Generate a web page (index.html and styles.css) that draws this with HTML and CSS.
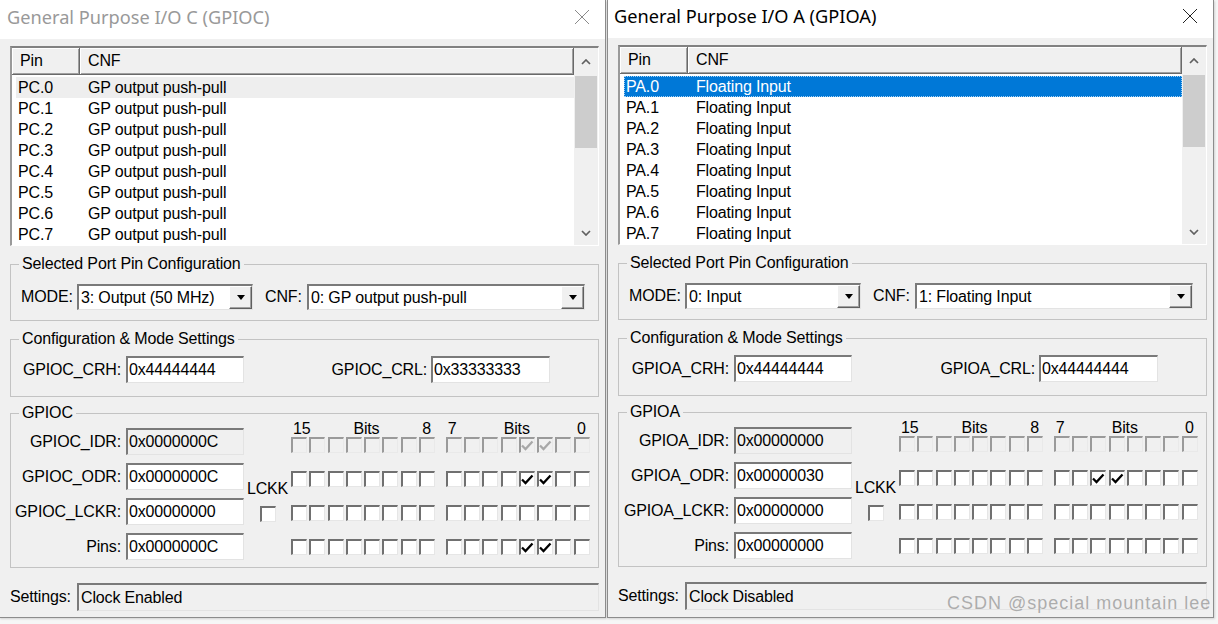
FILE: index.html
```html
<!DOCTYPE html>
<html>
<head>
<meta charset="utf-8">
<title>GPIO</title>
<link rel="stylesheet" href="styles.css">
</head>
<body>
<div class="desk">

<section class="win inactive">
  <header class="titlebar">
    <span class="title">General Purpose I/O C (GPIOC)</span>
    <svg class="close" viewBox="0 0 16 16"><path d="M1 1L15 15M15 1L1 15"/></svg>
  </header>
  <div class="body">
    <div class="listbox">
      <div class="lb-main">
        <div class="lb-head"><span class="hc pin">Pin</span><span class="hc cnf">CNF</span></div>
        <div class="lb-rows">
          <div class="row selg"><span class="c1">PC.0</span><span>GP output push-pull</span></div>
          <div class="row"><span class="c1">PC.1</span><span>GP output push-pull</span></div>
          <div class="row"><span class="c1">PC.2</span><span>GP output push-pull</span></div>
          <div class="row"><span class="c1">PC.3</span><span>GP output push-pull</span></div>
          <div class="row"><span class="c1">PC.4</span><span>GP output push-pull</span></div>
          <div class="row"><span class="c1">PC.5</span><span>GP output push-pull</span></div>
          <div class="row"><span class="c1">PC.6</span><span>GP output push-pull</span></div>
          <div class="row"><span class="c1">PC.7</span><span>GP output push-pull</span></div>
        </div>
      </div>
      <div class="vscroll">
        <span class="sbtn up"><svg viewBox="0 0 10 6"><path d="M1 5L5 1L9 5"/></svg></span>
        <span class="thumb"></span>
        <span class="sbtn down"><svg viewBox="0 0 10 6"><path d="M1 1L5 5L9 1"/></svg></span>
      </div>
    </div>

    <fieldset class="grp">
      <legend>Selected Port Pin Configuration</legend>
      <div class="g-sel">
        <span class="lbl-mode">MODE:</span>
        <div class="combo c-mode"><span class="val">3: Output (50 MHz)</span><span class="drop"></span></div>
        <span class="lbl-cnf">CNF:</span>
        <div class="combo c-cnf"><span class="val">0: GP output push-pull</span><span class="drop"></span></div>
      </div>
    </fieldset>

    <fieldset class="grp">
      <legend>Configuration &amp; Mode Settings</legend>
      <div class="g-cfg">
        <span class="rl">GPIOC_CRH:</span><span class="tb">0x44444444</span>
        <span class="rl rl2">GPIOC_CRL:</span><span class="tb tb2">0x33333333</span>
      </div>
    </fieldset>

    <fieldset class="grp">
      <legend>GPIOC</legend>
      <div class="port">
        <div class="regs">
          <div class="reg"><span class="rl">GPIOC_IDR:</span><span class="tb ro">0x0000000C</span></div>
          <div class="reg"><span class="rl">GPIOC_ODR:</span><span class="tb">0x0000000C</span></div>
          <div class="reg"><span class="rl">GPIOC_LCKR:</span><span class="tb">0x00000000</span></div>
          <div class="reg"><span class="rl">Pins:</span><span class="tb">0x0000000C</span></div>
        </div>
        <div class="lckk"><span>LCKK</span><i class="cb"></i></div>
        <div class="bits">
          <div class="bhead">
            <div class="bh"><span>15</span><span>Bits</span><span>8</span></div>
            <div class="bh"><span>7</span><span>Bits</span><span>0</span></div>
          </div>
          <div class="brow dis">
            <div class="bg"><i class="cb"></i><i class="cb"></i><i class="cb"></i><i class="cb"></i><i class="cb"></i><i class="cb"></i><i class="cb"></i><i class="cb"></i></div>
            <div class="bg"><i class="cb"></i><i class="cb"></i><i class="cb"></i><i class="cb"></i><i class="cb"><svg viewBox="0 0 13 13"><path d="M1 6.5L4.5 10L11.5 2.5"/></svg></i><i class="cb"><svg viewBox="0 0 13 13"><path d="M1 6.5L4.5 10L11.5 2.5"/></svg></i><i class="cb"></i><i class="cb"></i></div>
          </div>
          <div class="brow">
            <div class="bg"><i class="cb"></i><i class="cb"></i><i class="cb"></i><i class="cb"></i><i class="cb"></i><i class="cb"></i><i class="cb"></i><i class="cb"></i></div>
            <div class="bg"><i class="cb"></i><i class="cb"></i><i class="cb"></i><i class="cb"></i><i class="cb"><svg viewBox="0 0 13 13"><path d="M1 6.5L4.5 10L11.5 2.5"/></svg></i><i class="cb"><svg viewBox="0 0 13 13"><path d="M1 6.5L4.5 10L11.5 2.5"/></svg></i><i class="cb"></i><i class="cb"></i></div>
          </div>
          <div class="brow">
            <div class="bg"><i class="cb"></i><i class="cb"></i><i class="cb"></i><i class="cb"></i><i class="cb"></i><i class="cb"></i><i class="cb"></i><i class="cb"></i></div>
            <div class="bg"><i class="cb"></i><i class="cb"></i><i class="cb"></i><i class="cb"></i><i class="cb"></i><i class="cb"></i><i class="cb"></i><i class="cb"></i></div>
          </div>
          <div class="brow">
            <div class="bg"><i class="cb"></i><i class="cb"></i><i class="cb"></i><i class="cb"></i><i class="cb"></i><i class="cb"></i><i class="cb"></i><i class="cb"></i></div>
            <div class="bg"><i class="cb"></i><i class="cb"></i><i class="cb"></i><i class="cb"></i><i class="cb"><svg viewBox="0 0 13 13"><path d="M1 6.5L4.5 10L11.5 2.5"/></svg></i><i class="cb"><svg viewBox="0 0 13 13"><path d="M1 6.5L4.5 10L11.5 2.5"/></svg></i><i class="cb"></i><i class="cb"></i></div>
          </div>
        </div>
      </div>
    </fieldset>

    <div class="setrow"><span class="sl">Settings:</span><span class="tb ro wide">Clock Enabled</span></div>
  </div>
</section>

<section class="win active">
  <header class="titlebar">
    <span class="title">General Purpose I/O A (GPIOA)</span>
    <svg class="close" viewBox="0 0 16 16"><path d="M1 1L15 15M15 1L1 15"/></svg>
  </header>
  <div class="body">
    <div class="listbox">
      <div class="lb-main">
        <div class="lb-head"><span class="hc pin">Pin</span><span class="hc cnf">CNF</span></div>
        <div class="lb-rows">
          <div class="row sel"><span class="c1">PA.0</span><span>Floating Input</span></div>
          <div class="row"><span class="c1">PA.1</span><span>Floating Input</span></div>
          <div class="row"><span class="c1">PA.2</span><span>Floating Input</span></div>
          <div class="row"><span class="c1">PA.3</span><span>Floating Input</span></div>
          <div class="row"><span class="c1">PA.4</span><span>Floating Input</span></div>
          <div class="row"><span class="c1">PA.5</span><span>Floating Input</span></div>
          <div class="row"><span class="c1">PA.6</span><span>Floating Input</span></div>
          <div class="row"><span class="c1">PA.7</span><span>Floating Input</span></div>
        </div>
      </div>
      <div class="vscroll">
        <span class="sbtn up"><svg viewBox="0 0 10 6"><path d="M1 5L5 1L9 5"/></svg></span>
        <span class="thumb"></span>
        <span class="sbtn down"><svg viewBox="0 0 10 6"><path d="M1 1L5 5L9 1"/></svg></span>
      </div>
    </div>

    <fieldset class="grp">
      <legend>Selected Port Pin Configuration</legend>
      <div class="g-sel">
        <span class="lbl-mode">MODE:</span>
        <div class="combo c-mode"><span class="val">0: Input</span><span class="drop"></span></div>
        <span class="lbl-cnf">CNF:</span>
        <div class="combo c-cnf"><span class="val">1: Floating Input</span><span class="drop"></span></div>
      </div>
    </fieldset>

    <fieldset class="grp">
      <legend>Configuration &amp; Mode Settings</legend>
      <div class="g-cfg">
        <span class="rl">GPIOA_CRH:</span><span class="tb">0x44444444</span>
        <span class="rl rl2">GPIOA_CRL:</span><span class="tb tb2">0x44444444</span>
      </div>
    </fieldset>

    <fieldset class="grp">
      <legend>GPIOA</legend>
      <div class="port">
        <div class="regs">
          <div class="reg"><span class="rl">GPIOA_IDR:</span><span class="tb ro">0x00000000</span></div>
          <div class="reg"><span class="rl">GPIOA_ODR:</span><span class="tb">0x00000030</span></div>
          <div class="reg"><span class="rl">GPIOA_LCKR:</span><span class="tb">0x00000000</span></div>
          <div class="reg"><span class="rl">Pins:</span><span class="tb">0x00000000</span></div>
        </div>
        <div class="lckk"><span>LCKK</span><i class="cb"></i></div>
        <div class="bits">
          <div class="bhead">
            <div class="bh"><span>15</span><span>Bits</span><span>8</span></div>
            <div class="bh"><span>7</span><span>Bits</span><span>0</span></div>
          </div>
          <div class="brow dis">
            <div class="bg"><i class="cb"></i><i class="cb"></i><i class="cb"></i><i class="cb"></i><i class="cb"></i><i class="cb"></i><i class="cb"></i><i class="cb"></i></div>
            <div class="bg"><i class="cb"></i><i class="cb"></i><i class="cb"></i><i class="cb"></i><i class="cb"></i><i class="cb"></i><i class="cb"></i><i class="cb"></i></div>
          </div>
          <div class="brow">
            <div class="bg"><i class="cb"></i><i class="cb"></i><i class="cb"></i><i class="cb"></i><i class="cb"></i><i class="cb"></i><i class="cb"></i><i class="cb"></i></div>
            <div class="bg"><i class="cb"></i><i class="cb"></i><i class="cb"><svg viewBox="0 0 13 13"><path d="M1 6.5L4.5 10L11.5 2.5"/></svg></i><i class="cb"><svg viewBox="0 0 13 13"><path d="M1 6.5L4.5 10L11.5 2.5"/></svg></i><i class="cb"></i><i class="cb"></i><i class="cb"></i><i class="cb"></i></div>
          </div>
          <div class="brow">
            <div class="bg"><i class="cb"></i><i class="cb"></i><i class="cb"></i><i class="cb"></i><i class="cb"></i><i class="cb"></i><i class="cb"></i><i class="cb"></i></div>
            <div class="bg"><i class="cb"></i><i class="cb"></i><i class="cb"></i><i class="cb"></i><i class="cb"></i><i class="cb"></i><i class="cb"></i><i class="cb"></i></div>
          </div>
          <div class="brow">
            <div class="bg"><i class="cb"></i><i class="cb"></i><i class="cb"></i><i class="cb"></i><i class="cb"></i><i class="cb"></i><i class="cb"></i><i class="cb"></i></div>
            <div class="bg"><i class="cb"></i><i class="cb"></i><i class="cb"></i><i class="cb"></i><i class="cb"></i><i class="cb"></i><i class="cb"></i><i class="cb"></i></div>
          </div>
        </div>
      </div>
    </fieldset>

    <div class="setrow"><span class="sl">Settings:</span><span class="tb ro wide">Clock Disabled</span></div>
  </div>
</section>

<div class="watermark">CSDN @special mountain lee</div>
</div>
</body>
</html>
```

FILE: styles.css
```css
* { box-sizing: border-box; }
html, body { margin: 0; padding: 0; }
body {
  width: 1218px;
  height: 624px;
  overflow: hidden;
  background: #f6f6f6;
  font-family: "Liberation Sans", Arial, sans-serif;
  font-size: 16px;
  letter-spacing: -0.15px;
  color: #000;
}
.desk {
  position: relative;
  display: flex;
  align-items: flex-start;
  gap: 1px;
  margin-left: -1px;
  height: 624px;
}
.win {
  width: 607px;
  height: 618px;
  flex: none;
  display: flex;
  flex-direction: column;
  background: #f0f0f0;
  border: 1px solid #8c8c8c;
  border-top: 0;
  box-shadow: 1px 1px 2px rgba(0,0,0,0.15);
}
.titlebar {
  height: 39px;
  flex: none;
  background: #fff;
  display: flex;
  align-items: center;
  justify-content: space-between;
  padding: 0 15px 6px 7px;
}
.active .titlebar { height: 38px; padding-left: 6px; }
.title {
  font-family: "Noto Sans", "Open Sans", sans-serif;
  font-size: 18.2px;
  letter-spacing: 0;
  color: #000;
}
.inactive .title { color: #999; }
.close { width: 16px; height: 16px; fill: none; stroke: #222; stroke-width: 1; }
.inactive .close { stroke: #8a8a8a; }

.body {
  flex: 1;
  display: flex;
  flex-direction: column;
  padding: 7px 6px 6px 10px;
}

/* list view */
.listbox {
  height: 200px;
  flex: none;
  display: flex;
  background: #fff;
  border-style: solid;
  border-width: 2px 1px 1px 2px;
  border-color: #828282 #fff #fff #9a9a9a;
}
.lb-main { flex: 1; min-width: 0; display: flex; flex-direction: column; }
.lb-head { height: 27px; flex: none; display: flex; }
.hc {
  background: #f0f0f0;
  border-right: 1px solid #696969;
  border-bottom: 1px solid #696969;
  box-shadow: inset 1px 1px #fff, inset -1px -1px #a0a0a0;
  line-height: 26px;
  padding-left: 8px;
}
.hc.pin { width: 68px; }
.hc.cnf { flex: 1; }
.lb-rows { padding-top: 2px; }
.row {
  display: flex;
  height: 21px;
  line-height: 21px;
  margin-left: 4px;
  padding-left: 2px;
  white-space: nowrap;
}
.row .c1 { width: 70px; }
.row.selg { background: #eeeeee; }
.row.sel { background: #0078d7; color: #fff; outline: 1px dotted #9fd0f5; outline-offset: -1px; }

.vscroll {
  width: 24px;
  flex: none;
  background: #f0f0f0;
  display: flex;
  flex-direction: column;
  align-items: center;
}
.sbtn { display: flex; align-items: center; justify-content: center; width: 24px; }
.sbtn.up { height: 28px; }
.sbtn.down { height: 25px; margin-top: auto; }
.sbtn svg { width: 10px; height: 6px; fill: none; stroke: #606060; stroke-width: 1.7; }
.thumb { width: 22px; height: 72px; background: #cdcdcd; }

/* group boxes */
.grp {
  margin: 10px 0 0;
  padding: 0;
  min-width: 0;
  border: 1px solid #c3c3c3;
}
.grp + .grp { margin-top: 10px; }
.grp:last-of-type { margin-top: 8px; }
legend {
  padding: 0 3px;
  margin-left: 8px;
  line-height: 16px;
  height: 16px;
}

.g-sel {
  display: flex;
  align-items: center;
  padding: 12px 0 10px 10px;
}
.lbl-mode { width: 56px; white-space: nowrap; }
.lbl-cnf { width: 54px; padding-left: 12px; white-space: nowrap; }
.combo {
  height: 26px;
  display: flex;
  background: #fff;
  border-style: solid;
  border-width: 2px 1px 1px 2px;
  border-color: #7a7a7a #e3e3e3 #e3e3e3 #7a7a7a;
}
.c-mode { width: 176px; }
.c-cnf { width: 278px; }
.combo .val { flex: 1; padding-left: 2px; line-height: 23px; white-space: nowrap; }
.drop {
  width: 23px;
  flex: none;
  background: #f0f0f0;
  border-style: solid;
  border-width: 1px;
  border-color: #fff #5f5f5f #5f5f5f #fff;
  box-shadow: inset -1px -1px #a0a0a0;
  display: flex;
  align-items: center;
  justify-content: center;
}
.drop::after {
  content: "";
  border-left: 4.5px solid transparent;
  border-right: 4.5px solid transparent;
  border-top: 5px solid #000;
}

.g-cfg {
  display: flex;
  align-items: center;
  padding: 9px 0 13px 0;
}
.rl {
  width: 115px;
  flex: none;
  text-align: right;
  padding-right: 5px;
  white-space: nowrap;
}
.rl2 { width: 187px; padding-right: 4px; }
.tb {
  width: 118px;
  height: 27px;
  flex: none;
  display: flex;
  align-items: center;
  padding-left: 1px;
  background: #fff;
  border-style: solid;
  border-width: 2px 1px 1px 2px;
  border-color: #7a7a7a #e3e3e3 #e3e3e3 #7a7a7a;
  white-space: nowrap;
  overflow: hidden;
}
.tb2 { width: 119px; }
.tb.ro { background: #f0f0f0; }

/* port group */
.port { display: flex; padding: 0 0 7px 0; }
.regs { display: flex; flex-direction: column; gap: 8px; padding-top: 7px; }
.reg { display: flex; align-items: center; }
.lckk {
  width: 47px;
  flex: none;
  display: flex;
  flex-direction: column;
  align-items: center;
  padding-top: 59px;
}
.lckk span { line-height: 17px; }
.lckk .cb { margin-top: 9px; }
.bits { display: flex; flex-direction: column; }
.bhead { display: flex; gap: 10.6px; }
.bh {
  width: 144.1px;
  display: flex;
  justify-content: space-between;
  line-height: 16px;
  padding: 0 4px 0 2px;
}
.brow { display: flex; gap: 10.6px; margin-top: 18px; }
.bhead + .brow { margin-top: 0; }
.bg { display: flex; gap: 2.3px; }
.cb {
  display: block;
  width: 16px;
  height: 16px;
  flex: none;
  background: #fff;
  border-style: solid;
  border-width: 2px 1px 1px 2px;
  border-color: #707070 #e6e6e6 #e6e6e6 #707070;
}
.dis .cb { background: #f0f0f0; border-color: #9a9a9a #e9e9e9 #e9e9e9 #9a9a9a; }
.cb svg { display: block; width: 13px; height: 13px; fill: none; stroke: #000; stroke-width: 2.3; }
.dis .cb svg { stroke: #a8a8a8; }

/* settings */
.setrow { display: flex; align-items: center; margin-top: 15px; }
.sl { width: 67px; flex: none; }
.tb.wide { flex: 1; width: auto; height: 28px; padding-left: 2px; }

.watermark {
  position: absolute;
  left: 948px;
  top: 593px;
  font-size: 18px;
  letter-spacing: 1px;
  color: rgba(150, 150, 150, 0.75);
  white-space: nowrap;
}
```
